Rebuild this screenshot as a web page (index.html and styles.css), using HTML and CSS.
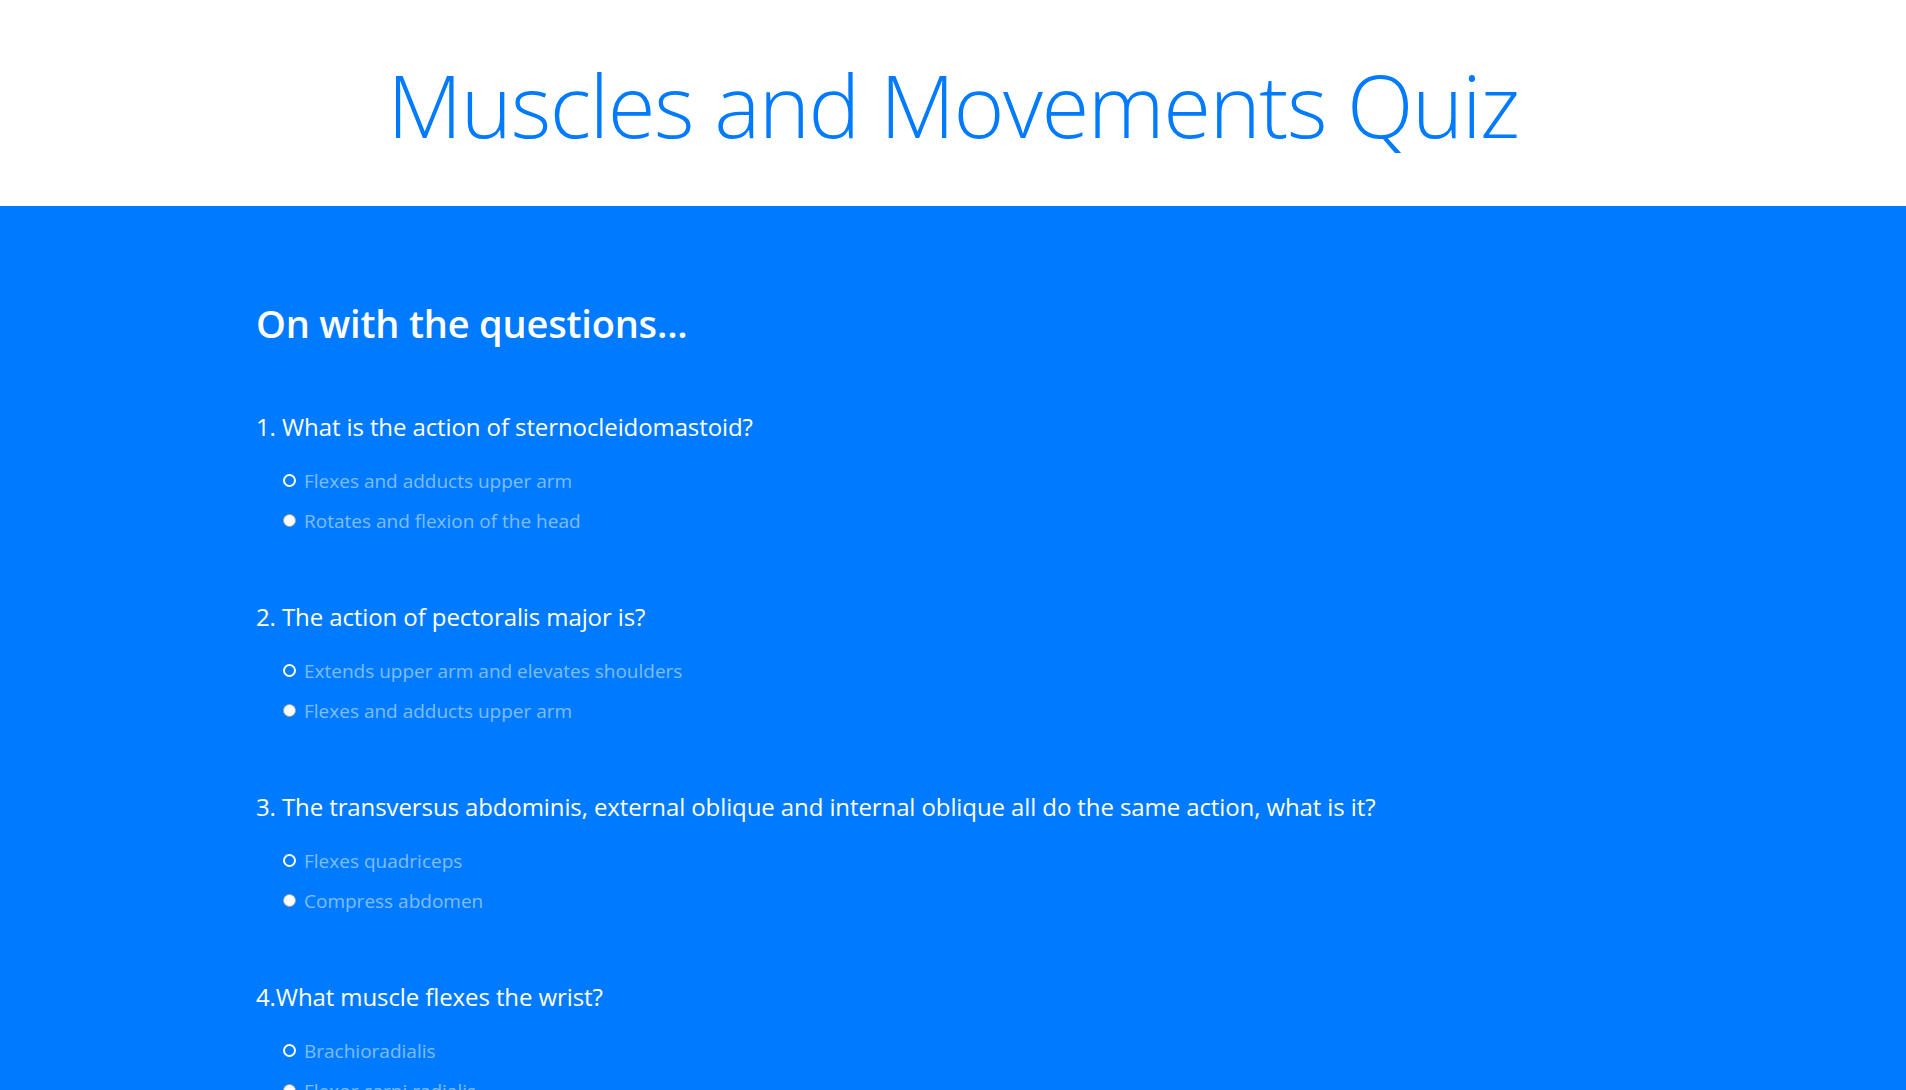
FILE: index.html
```html
<!DOCTYPE html>
<html lang="en">
<head>
<meta charset="utf-8">
<title>Muscles and Movements Quiz</title>
<link rel="stylesheet" href="styles.css">
</head>
<body>
<header class="hero">
  <h1 class="hero-title">Muscles and Movements Quiz</h1>
</header>
<main class="quiz">
  <h2 class="quiz-heading">On with the questions...</h2>

  <section class="question">
    <h4 class="question-text">1. What is the action of sternocleidomastoid?</h4>
    <ul class="options">
      <li class="option"><span class="radio radio-ring"></span><span class="option-label">Flexes and adducts upper arm</span></li>
      <li class="option"><span class="radio radio-fill"></span><span class="option-label">Rotates and flexion of the head</span></li>
    </ul>
  </section>

  <section class="question">
    <h4 class="question-text">2. The action of pectoralis major is?</h4>
    <ul class="options">
      <li class="option"><span class="radio radio-ring"></span><span class="option-label">Extends upper arm and elevates shoulders</span></li>
      <li class="option"><span class="radio radio-fill"></span><span class="option-label">Flexes and adducts upper arm</span></li>
    </ul>
  </section>

  <section class="question">
    <h4 class="question-text">3. The transversus abdominis, external oblique and internal oblique all do the same action, what is it?</h4>
    <ul class="options">
      <li class="option"><span class="radio radio-ring"></span><span class="option-label">Flexes quadriceps</span></li>
      <li class="option"><span class="radio radio-fill"></span><span class="option-label">Compress abdomen</span></li>
    </ul>
  </section>

  <section class="question">
    <h4 class="question-text">4.What muscle flexes the wrist?</h4>
    <ul class="options">
      <li class="option"><span class="radio radio-ring"></span><span class="option-label">Brachioradialis</span></li>
      <li class="option"><span class="radio radio-fill"></span><span class="option-label">Flexor carpi radialis</span></li>
    </ul>
  </section>
</main>
</body>
</html>
```

FILE: styles.css
```css
html {
  scrollbar-width: none;
}
html::-webkit-scrollbar {
  width: 0;
  height: 0;
}
body {
  margin: 0;
  font-family: "Open Sans", "Noto Sans", sans-serif;
  background: #007bff;
}
.hero {
  background: #ffffff;
  height: 206px;
  padding-top: 52px;
  box-sizing: border-box;
}
.hero-title {
  margin: 0;
  text-align: center;
  font-weight: 300;
  font-size: 87px;
  letter-spacing: -1.5px;
  line-height: 1.2;
  color: #007bff;
}
.quiz {
  padding: 93px 256px 60px;
  color: #ffffff;
}
.quiz-heading {
  margin: 0 0 65px;
  font-size: 38px;
  font-weight: 600;
  letter-spacing: -0.2px;
  line-height: 48px;
}
.question {
  margin-bottom: 61px;
}
.question-text {
  margin: 0 0 20px;
  font-size: 24px;
  font-weight: 400;
  letter-spacing: -0.1px;
  line-height: 29px;
}
.options {
  list-style: none;
  margin: 0;
  padding: 0 0 0 27px;
}
.option {
  display: flex;
  align-items: center;
  gap: 8px;
  height: 40px;
  font-size: 19px;
  line-height: 40px;
}
.option-label {
  color: rgba(255, 255, 255, 0.5);
}
.radio {
  width: 13px;
  height: 13px;
  box-sizing: border-box;
  border-radius: 50%;
  flex: none;
  margin-top: -2px;
}
.radio-ring {
  border: 2px solid #ffffff;
}
.radio-fill {
  background: #ffffff;
  border: 1px solid #9aa4ae;
}
```
